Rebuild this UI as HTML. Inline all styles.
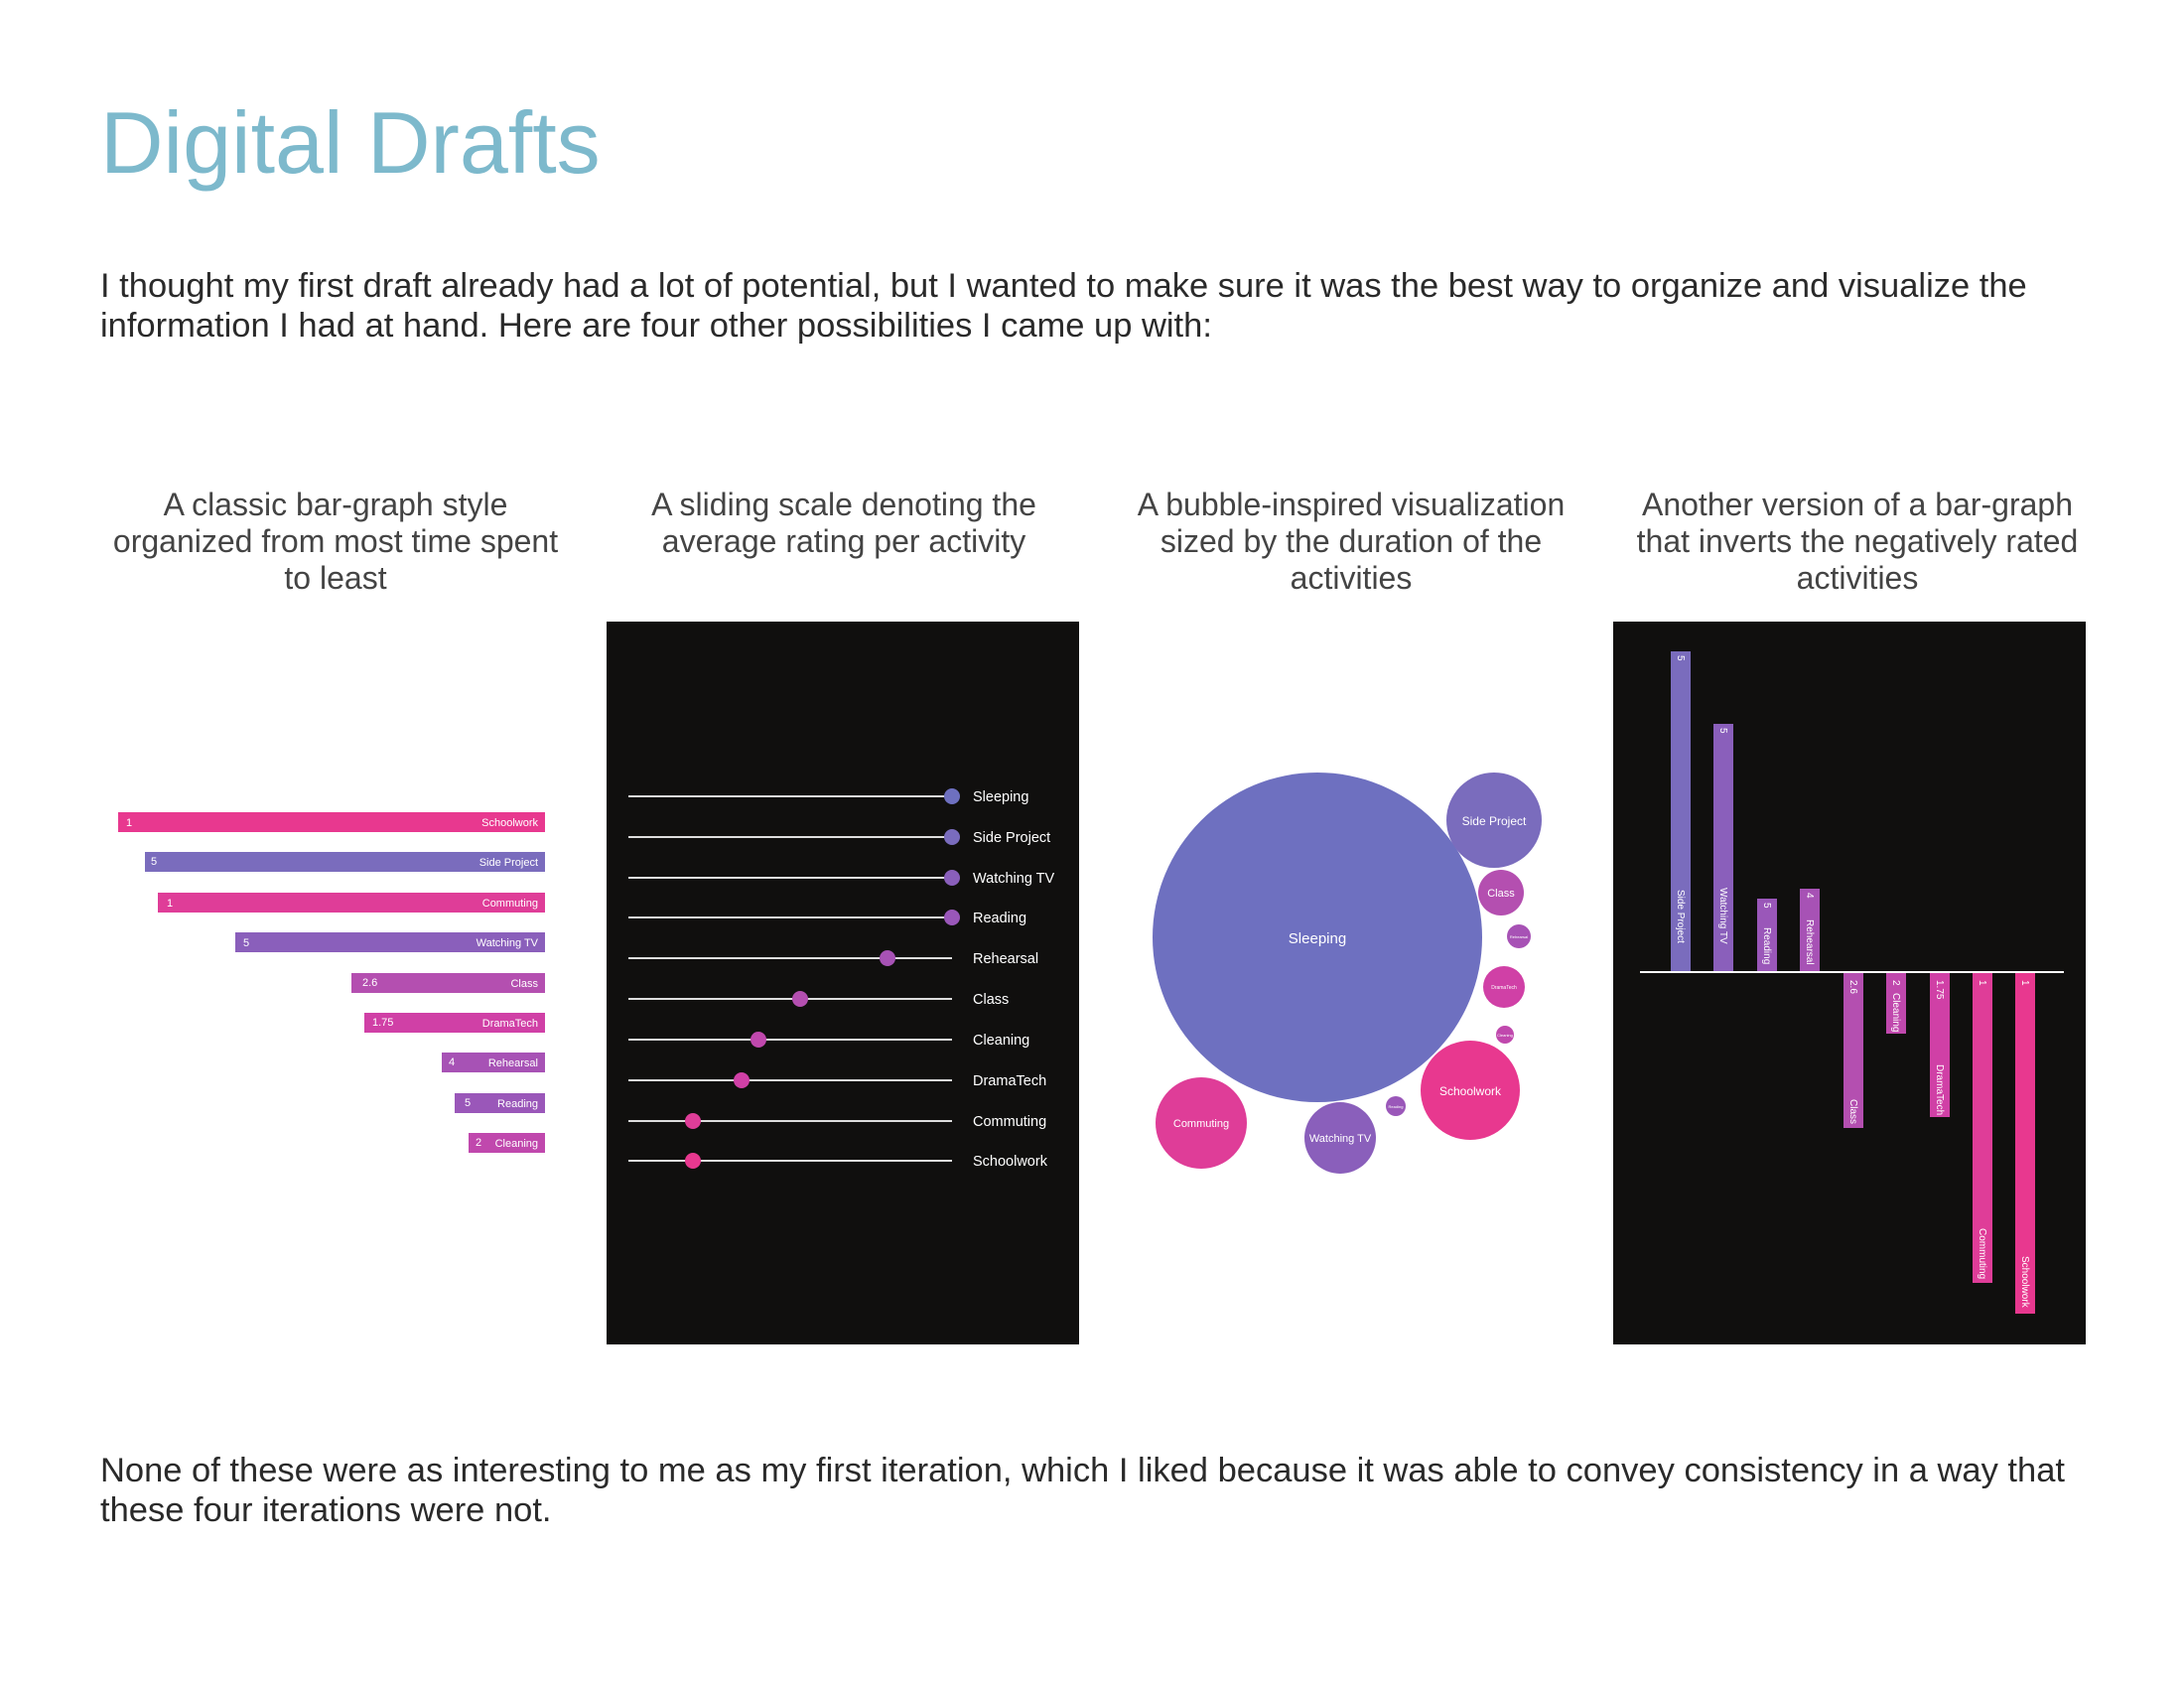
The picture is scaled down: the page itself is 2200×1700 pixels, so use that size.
<!DOCTYPE html>
<html><head><meta charset="utf-8">
<style>
html,body{margin:0;padding:0;background:#fff;}
body{width:2200px;height:1700px;position:relative;overflow:hidden;font-family:"Liberation Sans",sans-serif;}
.t{position:absolute;left:101px;top:100px;font-size:88px;color:#7db9cc;line-height:1;white-space:nowrap;}
.p{position:absolute;left:101px;font-size:34.5px;color:#2a2a2a;line-height:40px;white-space:nowrap;}
.c{position:absolute;width:540px;text-align:center;font-size:32px;color:#444;line-height:37px;}
svg{position:absolute;left:0;top:0;}
</style></head><body>
<div class="t">Digital Drafts</div>
<div class="p" style="top:268px">I thought my first draft already had a lot of potential, but I wanted to make sure it was the best way to organize and visualize the<br>information I had at hand. Here are four other possibilities I came up with:</div>
<div class="c" style="left:68px;top:490px">A classic bar-graph style<br>organized from most time spent<br>to least</div>
<div class="c" style="left:580px;top:490px">A sliding scale denoting the<br>average rating per activity</div>
<div class="c" style="left:1091px;top:490px">A bubble-inspired visualization<br>sized by the duration of the<br>activities</div>
<div class="c" style="left:1601px;top:490px">Another version of a bar-graph<br>that inverts the negatively rated<br>activities</div>
<div class="p" style="top:1461px">None of these were as interesting to me as my first iteration, which I liked because it was able to convey consistency in a way that<br>these four iterations were not.</div>

<svg width="2200" height="1700" font-family="Liberation Sans, sans-serif">
<!-- chart 1 -->
<g font-size="11" fill="#fff" transform="translate(-8,-3)">
<rect x="127" y="821" width="430" height="20" fill="#e8388f"/><text x="135" y="835">1</text><text x="550" y="835" text-anchor="end">Schoolwork</text>
<rect x="154" y="861" width="403" height="20" fill="#7a6cbd"/><text x="160" y="874">5</text><text x="550" y="875" text-anchor="end">Side Project</text>
<rect x="167" y="902" width="390" height="20" fill="#df3d98"/><text x="176" y="916">1</text><text x="550" y="916" text-anchor="end">Commuting</text>
<rect x="245" y="942" width="312" height="20" fill="#8a5fbb"/><text x="253" y="956">5</text><text x="550" y="956" text-anchor="end">Watching TV</text>
<rect x="362" y="983" width="195" height="20" fill="#b44fb0"/><text x="373" y="996">2.6</text><text x="550" y="997" text-anchor="end">Class</text>
<rect x="375" y="1023" width="182" height="20" fill="#d040a6"/><text x="383" y="1036">1.75</text><text x="550" y="1037" text-anchor="end">DramaTech</text>
<rect x="453" y="1063" width="104" height="20" fill="#a752b5"/><text x="460" y="1076">4</text><text x="550" y="1077" text-anchor="end">Rehearsal</text>
<rect x="466" y="1104" width="91" height="20" fill="#9a57b9"/><text x="476" y="1117">5</text><text x="550" y="1118" text-anchor="end">Reading</text>
<rect x="480" y="1144" width="77" height="20" fill="#c048ad"/><text x="487" y="1157">2</text><text x="550" y="1158" text-anchor="end">Cleaning</text>
</g>
<!-- chart 2 -->
<g transform="translate(-10,-3)">
<rect x="621" y="629" width="476" height="728" fill="#100f0e"/>
<g stroke="#ddd" stroke-width="2">
<line x1="643" y1="805" x2="969" y2="805"/><line x1="643" y1="846" x2="969" y2="846"/><line x1="643" y1="887" x2="969" y2="887"/><line x1="643" y1="927" x2="969" y2="927"/><line x1="643" y1="968" x2="969" y2="968"/><line x1="643" y1="1009" x2="969" y2="1009"/><line x1="643" y1="1050" x2="969" y2="1050"/><line x1="643" y1="1091" x2="969" y2="1091"/><line x1="643" y1="1132" x2="969" y2="1132"/><line x1="643" y1="1172" x2="969" y2="1172"/>
</g>
<circle cx="969" cy="805" r="8" fill="#6e70c0"/><circle cx="969" cy="846" r="8" fill="#7a6cbd"/><circle cx="969" cy="887" r="8" fill="#8a5fbb"/><circle cx="969" cy="927" r="8" fill="#9a57b9"/><circle cx="904" cy="968" r="8" fill="#a752b5"/><circle cx="816" cy="1009" r="8" fill="#b44fb0"/><circle cx="774" cy="1050" r="8" fill="#c048ad"/><circle cx="757" cy="1091" r="8" fill="#d040a6"/><circle cx="708" cy="1132" r="8" fill="#df3d98"/><circle cx="708" cy="1172" r="8" fill="#e8388f"/>
<g font-size="14.5" fill="#fff">
<text x="990" y="810">Sleeping</text><text x="990" y="851">Side Project</text><text x="990" y="892">Watching TV</text><text x="990" y="932">Reading</text><text x="990" y="973">Rehearsal</text><text x="990" y="1014">Class</text><text x="990" y="1055">Cleaning</text><text x="990" y="1096">DramaTech</text><text x="990" y="1137">Commuting</text><text x="990" y="1177">Schoolwork</text>
</g>
</g>
<!-- chart 3 -->
<g text-anchor="middle" fill="#fff" transform="translate(-5,-3)">
<circle cx="1332" cy="947" r="166" fill="#6e70c0"/><text x="1332" y="953" font-size="15">Sleeping</text>
<circle cx="1510" cy="829" r="48" fill="#7a6cbd"/><text x="1510" y="834" font-size="12">Side Project</text>
<circle cx="1517" cy="902" r="23" fill="#b44fb0"/><text x="1517" y="906" font-size="11">Class</text>
<circle cx="1535" cy="946" r="12" fill="#a752b5"/><text x="1535" y="948" font-size="4">Rehearsal</text>
<circle cx="1520" cy="997" r="21" fill="#d040a6"/><text x="1520" y="999" font-size="5">DramaTech</text>
<circle cx="1521" cy="1045" r="9" fill="#c048ad"/><text x="1521" y="1047" font-size="4">Cleaning</text>
<circle cx="1486" cy="1101" r="50" fill="#e8388f"/><text x="1486" y="1106" font-size="12">Schoolwork</text>
<circle cx="1411" cy="1117" r="10" fill="#9a57b9"/><text x="1411" y="1119" font-size="4">Reading</text>
<circle cx="1355" cy="1149" r="36" fill="#8a5fbb"/><text x="1355" y="1153" font-size="11">Watching TV</text>
<circle cx="1215" cy="1134" r="46" fill="#df3d98"/><text x="1215" y="1138" font-size="11">Commuting</text>
</g>
<!-- chart 4 -->
<g transform="translate(-7,-3)">
<rect x="1640" y="629" width="476" height="728" fill="#100f0e" transform="translate(-8,0)"/>
<rect x="1690" y="659" width="20" height="323" fill="#7a6cbd"/>
<rect x="1733" y="732" width="20" height="250" fill="#8a5fbb"/>
<rect x="1777" y="908" width="20" height="74" fill="#9a57b9"/>
<rect x="1820" y="898" width="20" height="84" fill="#a752b5"/>
<rect x="1864" y="982" width="20" height="157" fill="#b44fb0"/>
<rect x="1907" y="982" width="20" height="62" fill="#c048ad"/>
<rect x="1951" y="982" width="20" height="146" fill="#d040a6"/>
<rect x="1994" y="982" width="20" height="313" fill="#df3d98"/>
<rect x="2037" y="982" width="20" height="344" fill="#e8388f"/>
<line x1="1659" y1="982" x2="2086" y2="982" stroke="#fff" stroke-width="2"/>
<g font-size="10" fill="#fff">
<text transform="translate(1697,663) rotate(90)">5</text><text transform="translate(1697,899) rotate(90)">Side Project</text>
<text transform="translate(1740,736) rotate(90)">5</text><text transform="translate(1740,897) rotate(90)">Watching TV</text>
<text transform="translate(1784,912) rotate(90)">5</text><text transform="translate(1784,937) rotate(90)">Reading</text>
<text transform="translate(1827,902) rotate(90)">4</text><text transform="translate(1827,929) rotate(90)">Rehearsal</text>
<text transform="translate(1871,990) rotate(90)">2.6</text><text transform="translate(1871,1110) rotate(90)">Class</text>
<text transform="translate(1914,990) rotate(90)">2</text><text transform="translate(1914,1003) rotate(90)">Cleaning</text>
<text transform="translate(1958,990) rotate(90)">1.75</text><text transform="translate(1958,1075) rotate(90)">DramaTech</text>
<text transform="translate(2001,990) rotate(90)">1</text><text transform="translate(2001,1240) rotate(90)">Commuting</text>
<text transform="translate(2044,990) rotate(90)">1</text><text transform="translate(2044,1268) rotate(90)">Schoolwork</text>
</g>
</g>
</svg>
</body></html>
